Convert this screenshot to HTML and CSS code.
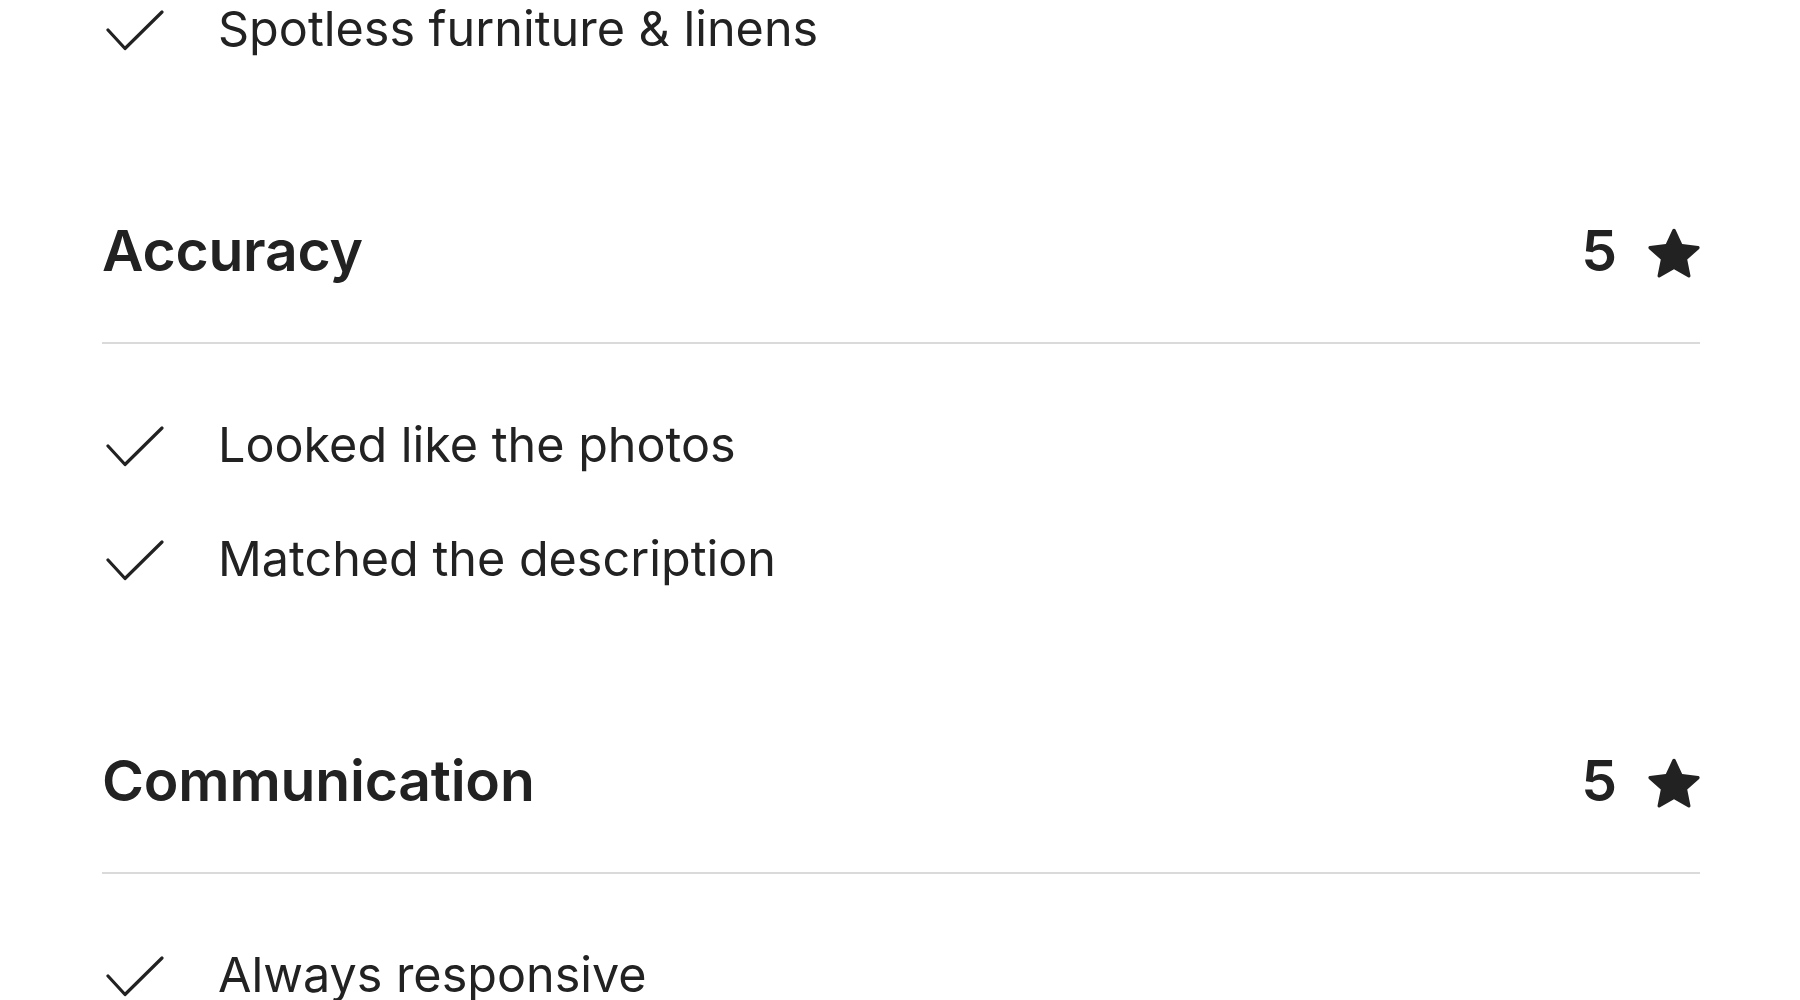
FILE: index.html
```html
<!DOCTYPE html>
<html lang="en">
<head>
<meta charset="utf-8">
<title>Ratings</title>
<link rel="stylesheet" href="styles.css">
</head>
<body>
<main class="page">
  <ul class="checks">
    <li class="check-item">
      <svg class="check-icon" viewBox="0 0 58 42" aria-hidden="true"><polyline points="2,21 19,39.5 56,3"/></svg>
      <span class="check-text">Spotless furniture &amp; linens</span>
    </li>
  </ul>

  <section class="category">
    <div class="cat-head">
      <h2 class="cat-title">Accuracy</h2>
      <div class="cat-score">
        <span class="score-num">5</span>
        <svg class="star" viewBox="0 0 32 32" aria-hidden="true"><path d="M15.094 1.579l-4.124 8.885-9.86 1.27a1 1 0 0 0-.542 1.736l7.293 6.565-1.965 9.852a1 1 0 0 0 1.483 1.061L16 25.951l8.625 4.997a1 1 0 0 0 1.482-1.06l-1.965-9.853 7.293-6.565a1 1 0 0 0-.541-1.735l-9.86-1.271-4.127-8.885a1 1 0 0 0-1.814 0z"/></svg>
      </div>
    </div>
    <ul class="checks">
      <li class="check-item">
        <svg class="check-icon" viewBox="0 0 58 42" aria-hidden="true"><polyline points="2,21 19,39.5 56,3"/></svg>
        <span class="check-text">Looked like the photos</span>
      </li>
      <li class="check-item">
        <svg class="check-icon" viewBox="0 0 58 42" aria-hidden="true"><polyline points="2,21 19,39.5 56,3"/></svg>
        <span class="check-text">Matched the description</span>
      </li>
    </ul>
  </section>

  <section class="category">
    <div class="cat-head">
      <h2 class="cat-title">Communication</h2>
      <div class="cat-score">
        <span class="score-num">5</span>
        <svg class="star" viewBox="0 0 32 32" aria-hidden="true"><path d="M15.094 1.579l-4.124 8.885-9.86 1.27a1 1 0 0 0-.542 1.736l7.293 6.565-1.965 9.852a1 1 0 0 0 1.483 1.061L16 25.951l8.625 4.997a1 1 0 0 0 1.482-1.06l-1.965-9.853 7.293-6.565a1 1 0 0 0-.541-1.735l-9.86-1.271-4.127-8.885a1 1 0 0 0-1.814 0z"/></svg>
      </div>
    </div>
    <ul class="checks">
      <li class="check-item">
        <svg class="check-icon" viewBox="0 0 58 42" aria-hidden="true"><polyline points="2,21 19,39.5 56,3"/></svg>
        <span class="check-text">Always responsive</span>
      </li>
    </ul>
  </section>
</main>
</body>
</html>
```
FILE: styles.css
```css
html, body {
  margin: 0;
  padding: 0;
  background: #ffffff;
  overflow: hidden;
}

body {
  font-family: "Inter", "Open Sans", sans-serif;
  color: #222222;
}

.page {
  padding: 0 100px 0 102px;
}

.checks {
  list-style: none;
  margin: 0;
  padding: 0;
  display: flex;
  flex-direction: column;
  gap: 56px;
}

.check-item {
  display: flex;
  align-items: flex-start;
  height: 58px;
}

.check-icon {
  width: 58px;
  height: 42px;
  margin: 9px 0 0 4px;
  flex: none;
  fill: none;
  stroke: #222222;
  stroke-width: 3.2;
  stroke-linecap: round;
  stroke-linejoin: round;
}

.check-text {
  margin-left: 54px;
  font-size: 48.5px;
  font-weight: 400;
  line-height: 58px;
  white-space: nowrap;
}

.category {
  margin-top: 159px;
}

.cat-head {
  display: flex;
  align-items: center;
  justify-content: space-between;
  height: 68px;
  padding-bottom: 57px;
  border-bottom: 2px solid #dadada;
  margin-bottom: 72px;
}

.cat-title {
  margin: 0;
  font-size: 57px;
  font-weight: 600;
  line-height: 68px;
  letter-spacing: -0.2px;
}

.cat-score {
  display: flex;
  align-items: center;
  gap: 31px;
}

.score-num {
  font-size: 57px;
  font-weight: 600;
  line-height: 68px;
}

.star {
  width: 52px;
  height: 52px;
  margin-top: 4px;
  fill: #222222;
}
```
